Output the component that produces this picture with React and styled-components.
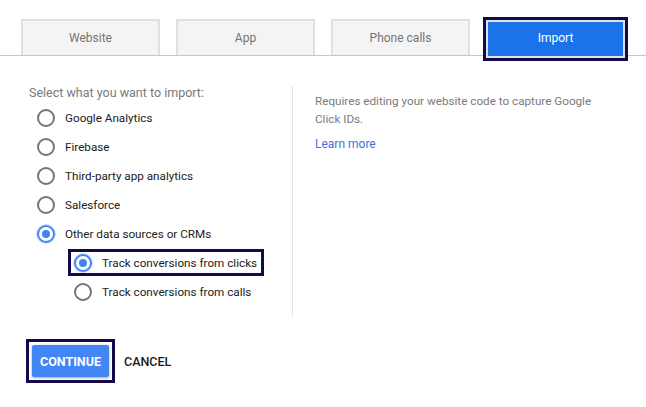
import styled, { createGlobalStyle } from "styled-components";

const GlobalStyle = createGlobalStyle`
  body {
    margin: 0;
    background: #ffffff;
    font-family: Roboto, "Liberation Sans", Arial, sans-serif;
  }
`;

const tabs = ["Website", "App", "Phone calls", "Import"];

const options = [
  { label: "Google Analytics" },
  { label: "Firebase" },
  { label: "Third-party app analytics" },
  { label: "Salesforce" },
  { label: "Other data sources or CRMs", checked: true },
];

const subOptions = [
  { label: "Track conversions from clicks", checked: true, focused: true },
  { label: "Track conversions from calls" },
];

const App = () => {
  return (
    <Page>
      <GlobalStyle />
      <TabBar>
        {tabs.map((t) => (
          <Tab key={t} $active={t === "Import"}>
            {t}
          </Tab>
        ))}
      </TabBar>
      <Content>
        <LeftCol>
          <Heading>Select what you want to import:</Heading>
          {options.map((o) => (
            <Row key={o.label}>
              <Radio $checked={o.checked} />
              <Label>{o.label}</Label>
            </Row>
          ))}
          {subOptions.map((o) => (
            <SubRow key={o.label}>
              <SubItem $focused={o.focused}>
                <Radio $checked={o.checked} />
                <Label>{o.label}</Label>
              </SubItem>
            </SubRow>
          ))}
        </LeftCol>
        <RightCol>
          <Help>
            Requires editing your website code to capture Google
            <br />
            Click IDs.
          </Help>
          <LearnMore href="#">Learn more</LearnMore>
        </RightCol>
      </Content>
      <Actions>
        <FocusRing>
          <PrimaryButton>CONTINUE</PrimaryButton>
        </FocusRing>
        <TextButton>CANCEL</TextButton>
      </Actions>
    </Page>
  );
};

const Page = styled.div`
  width: 646px;
  height: 407px;
  overflow: hidden;
`;

const TabBar = styled.div`
  display: flex;
  align-items: flex-end;
  gap: 16px;
  height: 56px;
  padding-left: 21px;
  border-bottom: 1px solid #c6c6c6;
  box-sizing: border-box;
`;

const Tab = styled.div`
  width: 139px;
  height: ${(p) => (p.$active ? "38px" : "36px")};
  margin-bottom: ${(p) => (p.$active ? "-3px" : "0")};
  box-sizing: border-box;
  display: flex;
  align-items: center;
  justify-content: center;
  padding-bottom: ${(p) => (p.$active ? "3px" : "0")};
  background: ${(p) => (p.$active ? "#1a73e8" : "#f4f4f4")};
  border: 2px solid #e0e0e0;
  border-bottom: ${(p) => (p.$active ? "2px solid #e0e0e0" : "none")};
  outline: ${(p) => (p.$active ? "3px solid #130a4a" : "none")};
  color: ${(p) => (p.$active ? "#ffffff" : "#757575")};
  font-size: 12px;
`;

const Content = styled.div`
  display: flex;
  margin-top: 30px;
`;

const LeftCol = styled.div`
  width: 263px;
  padding-left: 29px;
`;

const Heading = styled.div`
  font-size: 12.5px;
  line-height: 16px;
  color: #7a7a7a;
  margin-top: -1px;
  margin-bottom: 2px;
`;

const Row = styled.div`
  display: flex;
  align-items: center;
  height: 29px;
  padding-left: 8px;
`;

const SubRow = styled.div`
  display: flex;
  align-items: center;
  height: 29px;
  padding-left: 42px;
`;

const SubItem = styled.div`
  display: inline-flex;
  align-items: center;
  height: 21px;
  padding: 0 4px 0 3px;
  outline: ${(p) => (p.$focused ? "3px solid #130a4a" : "none")};
`;

const Radio = styled.span`
  width: 18px;
  height: 18px;
  box-sizing: border-box;
  border-radius: 50%;
  border: 2px solid ${(p) => (p.$checked ? "#4285f4" : "#757575")};
  margin-right: 10px;
  display: flex;
  align-items: center;
  justify-content: center;
  flex-shrink: 0;
  box-shadow: ${(p) => (p.$checked ? "0 0 0 1px rgba(66,133,244,0.25)" : "none")};

  &::after {
    content: "";
    display: ${(p) => (p.$checked ? "block" : "none")};
    width: 8px;
    height: 8px;
    border-radius: 50%;
    background: #4285f4;
  }
`;

const Label = styled.span`
  font-size: 11.7px;
  color: #212121;
  white-space: nowrap;
`;

const RightCol = styled.div`
  height: 230px;
  border-left: 1px solid #e2e2e2;
  padding-left: 22px;
  padding-top: 6px;
  box-sizing: border-box;
`;

const Help = styled.div`
  font-size: 11.7px;
  line-height: 18px;
  color: #7a7a7a;
`;

const LearnMore = styled.a`
  display: block;
  margin-top: 7px;
  font-size: 12px;
  line-height: 18px;
  color: #4270d8;
  text-decoration: none;
`;

const Actions = styled.div`
  display: flex;
  align-items: center;
  gap: 9px;
  padding-left: 26px;
  margin-top: 23px;
`;

const FocusRing = styled.div`
  display: flex;
  padding: 3px;
  border: 3px solid #130a4a;
`;

const PrimaryButton = styled.button`
  width: 77px;
  height: 32px;
  border: none;
  border-radius: 2px;
  background: #4285f4;
  color: #ffffff;
  font-family: inherit;
  font-size: 12.5px;
  font-weight: 700;
  padding: 0;
  box-shadow: 0 1px 3px rgba(0, 0, 0, 0.35);
`;

const TextButton = styled.button`
  border: none;
  background: none;
  padding: 0;
  font-family: inherit;
  font-size: 12.5px;
  font-weight: 500;
  color: #1a1a1a;
`;

export default App;
